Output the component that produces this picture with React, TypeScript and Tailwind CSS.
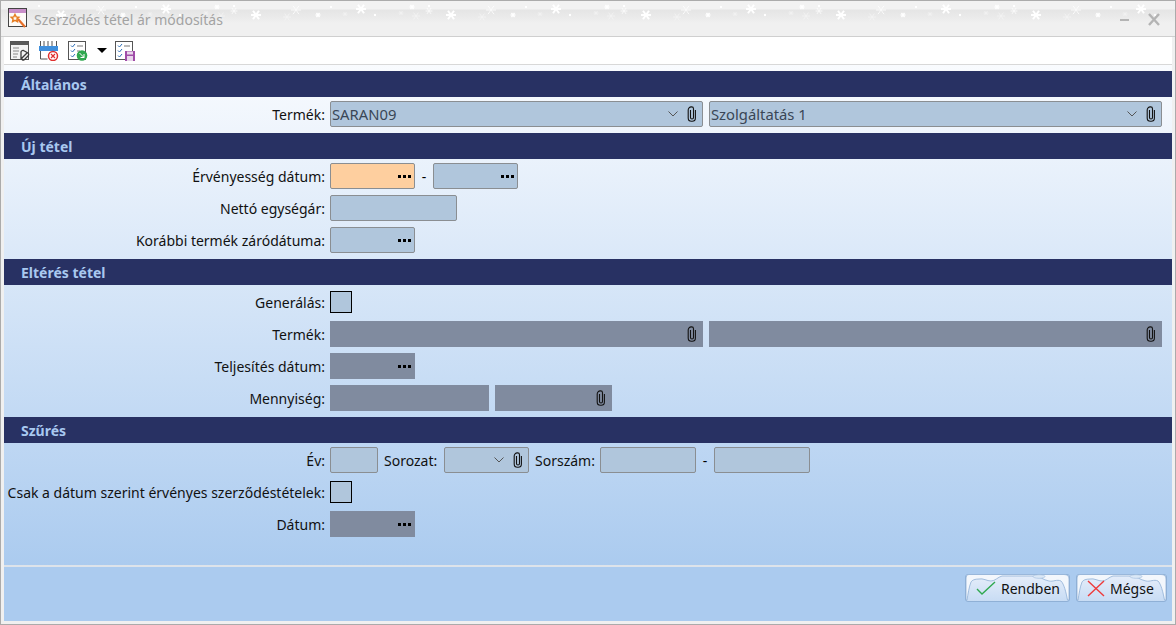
import React from 'react';

// one tile of the snow pattern, repeated along the title bar
const tile = [
  [0, 14, 5, 1], [105, 8, 5, 1], [62, 14, 2.5, 1], [156, 6, 2.5, 1], [40, 9, 5, 0], [31, 16, 4, 2], [89, 13, 2.5, 2],
  [173, 10, 3.5, 0], [145, 12, 2.5, 2], [160, 15, 4, 2], [-22, 5, 1, 1], [119, 14, 1, 1], [75, 6, 1, 1],
];

function Snow() {
  return (
    <svg className="absolute left-0 top-0 pointer-events-none" width="1176" height="36">
      {[60, 255, 450, 645, 840, 1035].map(o =>
        tile.map(([x, y, r, k], i) => (
          <g key={`${o}-${i}`} stroke="white" strokeWidth={k === 1 ? (r > 3 ? 2 : 1.4) : 1} opacity={k === 2 ? 0.45 : k === 0 ? 0.8 : 1}>
            <line x1={o + x - r} y1={y} x2={o + x + r} y2={y} />
            <line x1={o + x - r * 0.6} y1={y - r * 0.85} x2={o + x + r * 0.6} y2={y + r * 0.85} />
            <line x1={o + x + r * 0.6} y1={y - r * 0.85} x2={o + x - r * 0.6} y2={y + r * 0.85} />
          </g>
        )),
      )}
    </svg>
  );
}

function Clip() {
  return (
    <svg width="10" height="16" viewBox="0 0 10 16" fill="none" stroke="#111" strokeWidth="1.1">
      <path d="M3.5 4v7.5a1.5 1.5 0 0 0 3 0V2.8a1.9 1.9 0 0 0-1.9-1.9h-.4a3 3 0 0 0-3 3v8a3.3 3.3 0 0 0 3.3 3.3h.6a3.3 3.3 0 0 0 3.3-3.3V4" />
    </svg>
  );
}

function Chevron() {
  return (
    <svg width="10" height="6" viewBox="0 0 10 6" fill="none" stroke="#555" strokeWidth="1">
      <path d="M.5.5 5 5 9.500.5" />
    </svg>
  );
}

function Dots() {
  return (
    <div className="flex gap-[2px]">
      <span className="w-[3px] h-[3px] bg-black" />
      <span className="w-[3px] h-[3px] bg-black" />
      <span className="w-[3px] h-[3px] bg-black" />
    </div>
  );
}

const fieldCls = 'h-[26px] shrink-0 border border-[#8a8e92] bg-[#b0c6dc] rounded-[2px] flex items-center text-[#3a4656]';
const disabledCls = 'h-[26px] shrink-0 bg-[#808b9f] flex items-center justify-end';

function Row({ label, children, className = '' }: { label: string; children: React.ReactNode; className?: string }) {
  return (
    <div className={`flex items-center ${className}`}>
      <div className="w-[322px] shrink-0 text-right pr-[1px] text-[#111] whitespace-nowrap">{label}</div>
      <div className="ml-[4px] flex items-center">{children}</div>
    </div>
  );
}

function Header({ children }: { children: React.ReactNode }) {
  return (
    <div className="h-[26px] bg-[#283163] flex items-center pl-[17px] font-bold text-[#a9c8f0]">{children}</div>
  );
}

function Select({ w, value }: { w: string; value?: string }) {
  return (
    <div className={`${fieldCls} ${w} pl-[1px] pr-[5px]`}>
      <span className="flex-1 text-[14.8px]">{value}</span>
      <Chevron />
      <span className="ml-[9px] flex"><Clip /></span>
    </div>
  );
}

function DateField({ orange }: { orange?: boolean }) {
  return (
    <div className={`${fieldCls} w-[85px] justify-end pr-[3px] ${orange ? 'bg-[#fecf9f] border-[#0f78d2]' : ''}`}>
      <Dots />
    </div>
  );
}

function Check() {
  return <div className="w-[22px] h-[22px] border border-black bg-[#b0c6dc]" />;
}

function Ice({ w }: { w: number }) {
  return (
    <svg className="absolute -left-px -top-px pointer-events-none" width={w} height="28" viewBox={`0 0 ${w} 28`}>
      <path
        d={`M4 .5H${w - 6}Q${w - 1} .5 ${w - 1} 5V26H${w - 2.5}C${w - 4} 18 ${w - 6} 10 ${w - 9} 7C${w - 13} 5 ${w - 17} 8 ${w - 21} 7C${w - 27} 6 ${w - 30} 2 ${w - 37} 2H37C33 3 30 7 26 7C22 7 18 4 14 5C10 5 7 6 6 8C4 13 3 20 2 26H1V5Q1 .5 4 .5Z`}
        fill="#f3f7fc"
        stroke="#8fb0d6"
        strokeWidth="0.8"
      />
      <ellipse cx={w - 31} cy="2.500" rx="6" ry="1.800" fill="#dbe8f6" stroke="#9dbbdb" strokeWidth="0.6" />
    </svg>
  );
}

function Button({ w, px, label, icon }: { w: string; px: number; label: string; icon: React.ReactNode }) {
  return (
    <div className={`relative ${w} h-[28px] rounded-[3px] border border-[#8fb0d6] bg-gradient-to-b from-[#e6eefa] to-[#c8dcf4] flex items-center text-[#111]`}>
      <Ice w={px} />
      <span className="relative ml-[10px] flex">{icon}</span>
      <span className="relative ml-[5px] mt-[1px]">{label}</span>
    </div>
  );
}

export default function App() {
  return (
    <div className="w-[1176px] h-[625px] overflow-hidden flex flex-col bg-[#f0f0f0] border border-[#ababab] text-[14px] font-['Noto_Sans','Open_Sans',sans-serif] px-[3px] pb-[3px]">
      <div className="relative h-[36px] -mx-[3px] px-[7px] shrink-0 border-b border-[#cfcfcf] bg-[linear-gradient(to_bottom,#f2f2f2_0,#f2f2f2_8px,#e5e5e5_9px,#ebebeb_17px,#f0f0f0_22px)] flex items-center">
        <Snow />
        <svg width="20" height="20" viewBox="0 0 20 20" className="relative mt-[-1px]">
          <rect x=".5" y=".5" width="18" height="18" fill="#fdfbf8" stroke="#444" />
          <rect x="1" y="1" width="17" height="4" fill="#c98fc9" />
          <path d="m7 6.500 1.200 2.400 2.600.3-1.900 1.800.5 2.600L7 12.400l-2.400 1.200.5-2.600-1.900-1.800 2.600-.3z" fill="none" stroke="#e67e22" strokeWidth="1.500" />
          <path d="m10 11 7 8" stroke="#e8702a" strokeWidth="2.200" />
        </svg>
        <span className="relative ml-[6px] text-[14px] text-[#a3a3a3] mt-[1px]">Szerződés tétel ár módosítás</span>
        <div className="flex-1" />
        <svg width="50" height="14" viewBox="0 0 50 14" className="relative -mr-[1px] mt-[2px]">
          <rect x="1" y="6" width="9" height="2" fill="#b4b4b4" />
          <path d="m30 1 10 11M40 1 30 12" stroke="#b4b4b4" strokeWidth="2.400" />
        </svg>
      </div>

      <div className="h-[28px] shrink-0 bg-white border-b border-[#d8d8d8] flex items-center pl-[6px]">
        <svg width="20" height="20" viewBox="0 0 20 20" fill="none">
          <rect x=".5" y=".5" width="18" height="18" fill="#f4f4f4" stroke="#555" />
          <rect x="1" y="1" width="17" height="3" fill="#5a5a5a" />
          <path d="M3 7h6M3 10h6M3 13h5M3 16h4" stroke="#8a8a8a" />
          <path d="M11 18V11a2 2 0 0 1 2.500-1.500L18 12a2 2 0 0 1 0 3l-4 4a1.500 1.500 0 0 1-2-2l5-5" stroke="#3c3c3c" strokeWidth="1.300" />
        </svg>
        <svg width="20" height="20" viewBox="0 0 20 20" fill="none" className="ml-[9px]">
          <path d="M1.500 0v18M17.500 0v6M5 0v5M9 0v5M13 0v5M1.500 18h7" stroke="#555" />
          <rect x="0" y="5" width="19" height="5" fill="#3f8fdc" />
          <circle cx="14" cy="15" r="4.500" fill="#fff" stroke="#e03030" strokeWidth="1.500" />
          <path d="m12 13 4 4m0-4-4 4" stroke="#e03030" strokeWidth="1.200" />
        </svg>
        <svg width="20" height="20" viewBox="0 0 20 20" fill="none" className="ml-[9px]">
          <rect x=".5" y=".5" width="17" height="18" fill="#fff" stroke="#555" />
          <path d="m3 4.500 1.500 1.500L7 3M3 9.500 4.500 11 7 8M3 14.500 4.500 16 7 13" stroke="#2e6fb8" />
          <path d="M9 5h6M9 10h3" stroke="#777" />
          <circle cx="14" cy="14.500" r="5.300" fill="#2fa84f" />
          <path d="m11.500 12 4.500 4.500m0-3.500v3.500h-3.500" stroke="#fff" />
        </svg>
        <div className="ml-[9px] w-0 h-0 border-l-[5px] border-r-[5px] border-t-[5px] border-l-transparent border-r-transparent border-t-black" />
        <svg width="20" height="20" viewBox="0 0 20 20" fill="none" className="ml-[8px]">
          <rect x=".5" y=".5" width="17" height="18" fill="#fff" stroke="#555" />
          <path d="m3 4.500 1.500 1.500L7 3M3 9.500 4.500 11 7 8M3 14.500 4.500 16 7 13" stroke="#2e6fb8" />
          <path d="M9 5h6" stroke="#777" />
          <rect x="10" y="10" width="10" height="10" fill="#a04ca8" />
          <rect x="12" y="10.500" width="6" height="3" fill="#e8d5ea" />
          <rect x="12" y="15" width="6" height="5" fill="#e8d5ea" />
        </svg>
      </div>

      <div className="flex-1 flex flex-col pt-[6px] bg-gradient-to-b from-[#f9fbfe] to-[#abcbef] to-90%">
        <Header>Általános</Header>
        <div className="pt-[4px] pb-[6px]">
          <Row label="Termék:">
            <Select w="w-[373px]" value="SARAN09" />
            <div className="ml-[6px]"><Select w="w-[453px]" value="Szolgáltatás 1" /></div>
          </Row>
        </div>

        <Header>Új tétel</Header>
        <div className="pt-[4px] pb-[6px] flex flex-col gap-[6px]">
          <Row label="Érvényesség dátum:">
            <DateField orange />
            <span className="w-[18px] text-center">-</span>
            <DateField />
          </Row>
          <Row label="Nettó egységár:"><div className={`${fieldCls} w-[127px]`} /></Row>
          <Row label="Korábbi termék záródátuma:"><DateField /></Row>
        </div>

        <Header>Eltérés tétel</Header>
        <div className="pt-[6px] pb-[6px] flex flex-col gap-[6px]">
          <Row label="Generálás:" className="mb-[2px]"><Check /></Row>
          <Row label="Termék:">
            <div className={`${disabledCls} w-[373px] pr-[6px]`}><Clip /></div>
            <div className={`${disabledCls} w-[453px] ml-[6px] pr-[6px]`}><Clip /></div>
          </Row>
          <Row label="Teljesítés dátum:">
            <div className={`${disabledCls} w-[85px] pr-[4px]`}><Dots /></div>
          </Row>
          <Row label="Mennyiség:">
            <div className={`${disabledCls} w-[159px]`} />
            <div className={`${disabledCls} w-[117px] ml-[6px] pr-[6px]`}><Clip /></div>
          </Row>
        </div>

        <Header>Szűrés</Header>
        <div className="pt-[4px] flex flex-col gap-[8px]">
          <Row label="Év:">
            <div className={`${fieldCls} w-[48px]`} />
            <span className="ml-[6px] w-[60px] text-[#111]">Sorozat:</span>
            <Select w="w-[85px]" />
            <span className="ml-[6px] w-[65px] text-[#111]">Sorszám:</span>
            <div className={`${fieldCls} w-[96px]`} />
            <span className="w-[18px] text-center">-</span>
            <div className={`${fieldCls} w-[96px]`} />
          </Row>
          <Row label="Csak a dátum szerint érvényes szerződéstételek:"><Check /></Row>
          <Row label="Dátum:">
            <div className={`${disabledCls} w-[85px] pr-[4px]`}><Dots /></div>
          </Row>
        </div>

        <div className="flex-1" />
        <div className="h-[2px] bg-[#dde3ea]" />
        <div className="h-[54px] shrink-0 bg-[#abcbef] flex justify-end pt-[7px] pr-[5px] gap-[6px]">
          <Button
            w="w-[105px]"
            px={105}
            label="Rendben"
            icon={
              <svg width="20" height="14" viewBox="0 0 20 14" fill="none" stroke="#2fa84f" strokeWidth="1.400">
                <path d="m1 8 5 5L19 1" />
              </svg>
            }
          />
          <Button
            w="w-[91px]"
            px={91}
            label="Mégse"
            icon={
              <svg width="18" height="17" viewBox="0 0 18 17" fill="none" stroke="#ee3a3a" strokeWidth="1.400">
                <path d="m1 1 16 15M17 1 1 16" />
              </svg>
            }
          />
        </div>
      </div>
    </div>
  );
}
